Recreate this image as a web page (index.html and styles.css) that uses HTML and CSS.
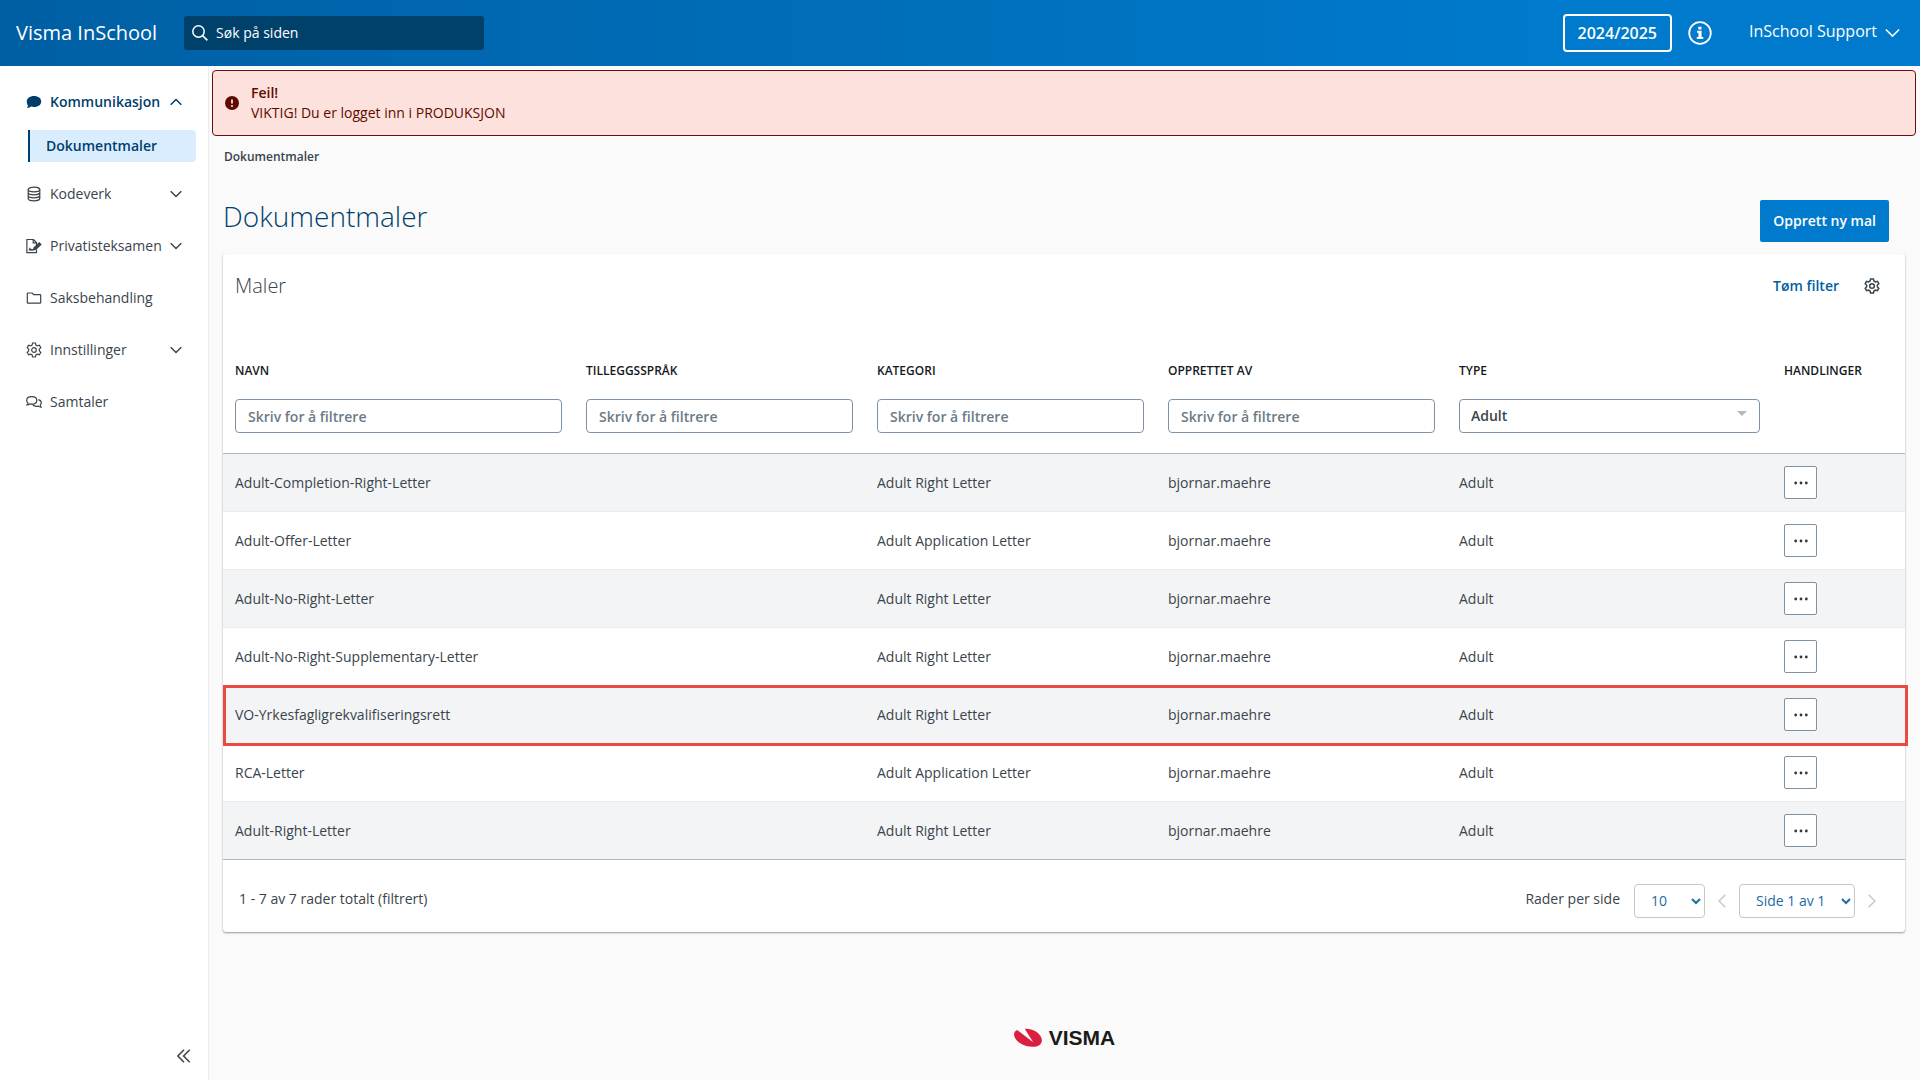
FILE: index.html
```html
<!DOCTYPE html>
<html lang="no">
<head>
    <meta charset="UTF-8">
    <meta name="viewport" content="width=device-width, initial-scale=1.0">
    <title>Dokumentmaler - Visma InSchool</title>
    <link rel="stylesheet" href="styles.css">
</head>
<body>
    <!-- icons used more than once -->
    <svg class="icon-defs" aria-hidden="true">
        <symbol id="icon-down" viewBox="0 0 12 8"><path d="M.7 1.2 6 6.5l5.3-5.3"/></symbol>
        <symbol id="icon-gear" viewBox="0 0 16 16">
            <path d="M6.6 1h2.8l.5 2 1.5.9 2-.6 1.4 2.4L13.300 7.200v1.600l1.500 1.500-1.400 2.400-2-.6-1.500.9-.5 2H6.600l-.5-2-1.500-.9-2 .6-1.400-2.400 1.500-1.500V7.200L1.200 5.700l1.400-2.400 2 .6 1.500-.9z"/>
            <circle cx="8" cy="8" r="2.300"/>
        </symbol>
        <symbol id="icon-dots" viewBox="0 0 14 4">
            <circle cx="1.700" cy="2" r="1.400"/><circle cx="7" cy="2" r="1.400"/><circle cx="12.300" cy="2" r="1.400"/>
        </symbol>
    </svg>

    <header class="topbar">
        <a class="brand" href="#">Visma InSchool</a>
        <div class="search">
            <svg class="search-icon" viewBox="0 0 16 16"><circle cx="6.500" cy="6.500" r="5.700"/><path d="M10.600 10.600l4.800 4.800"/></svg>
            <input type="search" placeholder="Søk på siden" aria-label="Søk på siden">
        </div>
        <div class="topbar-right">
            <button class="year-btn">2024/2025</button>
            <button class="info-btn" aria-label="Informasjon">
                <svg viewBox="0 0 24 24">
                    <circle cx="12" cy="12" r="10.800" fill="none" stroke="#fff" stroke-width="1.800"/>
                    <path fill="#fff" d="M10.300 5.700h3.200v2.700h-3.200zM9 9.800h4.600v6.200h1.700v1.900H8.800V16h1.700v-4.300H9z"/>
                </svg>
            </button>
            <button class="user-btn">InSchool Support <svg class="chevron"><use href="#icon-down"/></svg></button>
        </div>
    </header>

    <div class="layout">
        <aside class="sidebar">
            <nav>
                <button class="nav-item active">
                    <svg class="nav-icon solid" viewBox="0 0 16 16"><path d="M8 2c4.200 0 7.200 2.300 7.200 5.500S12.200 13 8 13c-1.100 0-2-.1-2.900-.4C4 13.600 2.500 14.100.9 14c.6-.6 1-1.700 1-2.700C1.100 10.200.8 9 .8 7.500.8 4.300 3.800 2 8 2z"/></svg>
                    Kommunikasjon
                    <svg class="chevron up"><use href="#icon-down"/></svg>
                </button>
                <a class="nav-sub" href="#">Dokumentmaler</a>
                <button class="nav-item">
                    <svg class="nav-icon" viewBox="0 0 16 16"><ellipse cx="8" cy="3.500" rx="5.800" ry="2.300"/><path d="M2.200 3.500v9c0 1.300 2.600 2.300 5.800 2.300s5.800-1 5.800-2.300v-9M2.200 6.500c0 1.300 2.600 2.300 5.800 2.300s5.800-1 5.800-2.300M2.200 9.500c0 1.300 2.600 2.300 5.800 2.300s5.800-1 5.800-2.300"/></svg>
                    Kodeverk
                    <svg class="chevron"><use href="#icon-down"/></svg>
                </button>
                <button class="nav-item">
                    <svg class="nav-icon" viewBox="0 0 16 16"><path d="M10.500 11.500v3.200H.9V1.500h6.600l3 3V7M7.200 1.700v3.100h3.100M3 12.500l1-2 1 1.800 1-.8 1 .8"/><path d="M7.500 11.800l.7-2.200 5-4.700 1.700 1.700-5 4.600z" fill="#3a444c"/></svg>
                    Privatisteksamen
                    <svg class="chevron"><use href="#icon-down"/></svg>
                </button>
                <a class="nav-item" href="#">
                    <svg class="nav-icon" viewBox="0 0 16 16"><path d="M1.300 13V3.600c0-.4.200-.6.600-.6h4.300l1.500 1.700h6.400c.4 0 .6.200.6.600V12.500c0 .4-.2.600-.6.600H1.900c-.4 0-.6-.1-.6-.6z"/></svg>
                    Saksbehandling
                </a>
                <button class="nav-item">
                    <svg class="nav-icon"><use href="#icon-gear"/></svg>
                    Innstillinger
                    <svg class="chevron"><use href="#icon-down"/></svg>
                </button>
                <a class="nav-item" href="#">
                    <svg class="nav-icon" viewBox="0 0 16 16"><path d="M5.800 2.700c3 0 5 1.500 5 3.700s-2 3.700-5 3.700c-.7 0-1.300-.1-1.900-.2-.8.6-1.800.9-2.900.9.600-.6.900-1.200.9-1.900C1.200 8.300.7 7.400.7 6.400c0-2.200 2.100-3.700 5.100-3.700z"/><path d="M12.300 5.600c1.800.4 3 1.600 3 3.200 0 .9-.4 1.700-1.100 2.300 0 .7.300 1.400.9 2-1.100 0-2.100-.4-2.800-1-2.400.5-4.700-.1-5.700-1.700"/></svg>
                    Samtaler
                </a>
            </nav>
            <button class="collapse-btn" aria-label="Skjul meny">
                <svg viewBox="0 0 14 14"><path d="M7 .8.900 7 7 13.200M12.700.8 6.600 7l6.100 6.200"/></svg>
            </button>
        </aside>

        <main class="main">
            <div class="alert" role="alert">
                <svg class="alert-icon" viewBox="0 0 14 14"><circle cx="7" cy="7" r="7" fill="#5f0a00"/><path d="M7 3.500v4" stroke="#fce1dc" stroke-width="1.800"/><circle cx="7" cy="10" r="1.100" fill="#fce1dc"/></svg>
                <div>
                    <strong>Feil!</strong>
                    <p>VIKTIG! Du er logget inn i PRODUKSJON</p>
                </div>
            </div>

            <div class="breadcrumb">Dokumentmaler</div>
            <div class="page-head">
                <h1>Dokumentmaler</h1>
                <button class="primary-btn">Opprett ny mal</button>
            </div>

            <section class="card">
                <div class="card-head">
                    <h2>Maler</h2>
                    <button class="link-btn">Tøm filter</button>
                    <button class="gear-btn" aria-label="Tabellinnstillinger"><svg><use href="#icon-gear"/></svg></button>
                </div>

                <table class="templates">
                    <colgroup>
                        <col class="col-name"><col class="col-mid"><col class="col-mid"><col class="col-mid"><col class="col-type"><col class="col-actions">
                    </colgroup>
                    <thead>
                        <tr>
                            <th><label for="f-navn">NAVN</label><input id="f-navn" type="text" placeholder="Skriv for å filtrere"></th>
                            <th><label for="f-sprak">TILLEGGSSPRÅK</label><input id="f-sprak" type="text" placeholder="Skriv for å filtrere"></th>
                            <th><label for="f-kategori">KATEGORI</label><input id="f-kategori" type="text" placeholder="Skriv for å filtrere"></th>
                            <th><label for="f-opprettet">OPPRETTET AV</label><input id="f-opprettet" type="text" placeholder="Skriv for å filtrere"></th>
                            <th><label for="f-type">TYPE</label><div class="type-select"><select id="f-type"><option>Adult</option></select></div></th>
                            <th><span class="th-text">HANDLINGER</span></th>
                        </tr>
                    </thead>
                    <tbody>
                        <tr>
                            <td>Adult-Completion-Right-Letter</td><td></td><td>Adult Right Letter</td><td>bjornar.maehre</td><td>Adult</td>
                            <td><button class="more-btn" aria-label="Handlinger"><svg><use href="#icon-dots"/></svg></button></td>
                        </tr>
                        <tr>
                            <td>Adult-Offer-Letter</td><td></td><td>Adult Application Letter</td><td>bjornar.maehre</td><td>Adult</td>
                            <td><button class="more-btn" aria-label="Handlinger"><svg><use href="#icon-dots"/></svg></button></td>
                        </tr>
                        <tr>
                            <td>Adult-No-Right-Letter</td><td></td><td>Adult Right Letter</td><td>bjornar.maehre</td><td>Adult</td>
                            <td><button class="more-btn" aria-label="Handlinger"><svg><use href="#icon-dots"/></svg></button></td>
                        </tr>
                        <tr>
                            <td>Adult-No-Right-Supplementary-Letter</td><td></td><td>Adult Right Letter</td><td>bjornar.maehre</td><td>Adult</td>
                            <td><button class="more-btn" aria-label="Handlinger"><svg><use href="#icon-dots"/></svg></button></td>
                        </tr>
                        <tr class="marked">
                            <td>VO-Yrkesfagligrekvalifiseringsrett</td><td></td><td>Adult Right Letter</td><td>bjornar.maehre</td><td>Adult</td>
                            <td><button class="more-btn" aria-label="Handlinger"><svg><use href="#icon-dots"/></svg></button></td>
                        </tr>
                        <tr>
                            <td>RCA-Letter</td><td></td><td>Adult Application Letter</td><td>bjornar.maehre</td><td>Adult</td>
                            <td><button class="more-btn" aria-label="Handlinger"><svg><use href="#icon-dots"/></svg></button></td>
                        </tr>
                        <tr>
                            <td>Adult-Right-Letter</td><td></td><td>Adult Right Letter</td><td>bjornar.maehre</td><td>Adult</td>
                            <td><button class="more-btn" aria-label="Handlinger"><svg><use href="#icon-dots"/></svg></button></td>
                        </tr>
                    </tbody>
                </table>

                <div class="card-foot">
                    <span class="row-count">1 - 7 av 7 rader totalt (filtrert)</span>
                    <label class="per-page" for="per-page">Rader per side</label>
                    <select id="per-page" class="page-select"><option>10</option></select>
                    <button class="page-btn" aria-label="Forrige side" disabled><svg viewBox="0 0 8 14"><path d="M7.300.7 1 7l6.300 6.300"/></svg></button>
                    <select class="page-select wide" aria-label="Side"><option>Side 1 av 1</option></select>
                    <button class="page-btn" aria-label="Neste side" disabled><svg viewBox="0 0 8 14"><path d="M.7.7 7 7 .7 13.300"/></svg></button>
                </div>
            </section>

            <footer class="footer">
                <svg class="logo-mark" viewBox="0 0 28 20"><path fill="#d9213f" d="M10.700.8C18 .2 25 4 27.300 9.500 29.500 15.500 25 19 18 18.800 10.500 18.500 2.600 14.500.5 8.800-.6 5.500.4 3 3.200 1.900L19.200 14.200z"/></svg>
                <span class="logo-text">VISMA</span>
            </footer>
        </main>
    </div>
</body>
</html>
```
FILE: styles.css
```css
:root {
    --blue: #007acc;
    --blue-dark: #003f6b;
    --text: #3a444c;
    --border: #7f92a3;
}

* {
    box-sizing: border-box;
}

body {
    margin: 0;
    min-height: 100vh;
    display: flex;
    flex-direction: column;
    background: #fafafa;
    color: var(--text);
    font-family: "Open Sans", "Noto Sans", sans-serif;
    font-size: 14px;
    line-height: 20px;
}

button, input, select {
    font: inherit;
    color: inherit;
}

button {
    background: none;
    border: none;
    padding: 0;
    cursor: pointer;
}

a {
    color: inherit;
    text-decoration: none;
}

svg {
    display: block;
    flex: none;
}

.icon-defs {
    display: none;
}

.chevron {
    width: 12px;
    height: 8px;
    fill: none;
    stroke: currentColor;
    stroke-width: 1.5;
}

.chevron.up {
    transform: rotate(180deg);
}

/* top bar */
.topbar {
    display: flex;
    align-items: center;
    height: 66px;
    padding: 0 20px 0 16px;
    background: linear-gradient(90deg, #005fa3, var(--blue) 80%);
    color: #fff;
}

.brand {
    font-size: 20px;
    margin-right: 27px;
}

.search {
    display: flex;
    align-items: center;
    gap: 8px;
    width: 300px;
    height: 34px;
    padding: 0 8px;
    background: #00416b;
    border-radius: 3px;
}

.search-icon {
    width: 16px;
    height: 16px;
    fill: none;
    stroke: #fff;
    stroke-width: 1.5;
}

.search input {
    flex: 1;
    min-width: 0;
    padding: 0;
    background: none;
    border: none;
    outline: none;
}

.search input::placeholder {
    color: #fff;
}

.topbar-right {
    display: flex;
    align-items: center;
    margin-left: auto;
    font-size: 16px;
}

.year-btn {
    height: 38px;
    padding: 0 13px;
    border: 2px solid #fff;
    border-radius: 4px;
    font-weight: 600;
}

.info-btn {
    margin: 0 37px 0 16px;
}

.info-btn svg {
    width: 24px;
    height: 24px;
}

.user-btn {
    display: flex;
    align-items: center;
    gap: 8px;
    padding-bottom: 4px;
}

.user-btn .chevron {
    width: 15px;
    height: 10px;
    margin-top: 4px;
    stroke-width: 1.2;
}

.layout {
    flex: 1;
    display: flex;
}

/* sidebar */
.sidebar {
    display: flex;
    flex-direction: column;
    width: 209px;
    flex: none;
    padding: 10px 12px 17px 26px;
    background: #fff;
    border-right: 1px solid #ebebeb;
}

.nav-item {
    display: flex;
    align-items: center;
    gap: 8px;
    width: 100%;
    height: 52px;
    padding-right: 14px;
    text-align: left;
    white-space: nowrap;
}

.nav-item .chevron {
    margin-left: auto;
}

.nav-item.active {
    color: var(--blue-dark);
    font-weight: 600;
}

.nav-icon {
    width: 16px;
    height: 16px;
    fill: none;
    stroke: currentColor;
    stroke-width: 1.2;
}

.nav-icon.solid {
    fill: currentColor;
    stroke: none;
}

.nav-sub {
    display: block;
    margin: 2px 0 6px 2px;
    padding: 6px 16px;
    background: #d9edff;
    border-left: 2px solid var(--blue-dark);
    border-radius: 0 4px 4px 0;
    color: var(--blue-dark);
    font-weight: 600;
}

.collapse-btn {
    margin-top: auto;
    align-self: flex-end;
    padding-right: 5px;
}

.collapse-btn svg {
    width: 14px;
    height: 14px;
    fill: none;
    stroke: var(--text);
    stroke-width: 1.5;
}

/* main */
.main {
    flex: 1;
    min-width: 0;
    display: flex;
    flex-direction: column;
}

.alert {
    display: flex;
    align-items: center;
    gap: 12px;
    margin: 4px 4px 0 3px;
    padding: 12px;
    background: #fce1dc;
    border: 1px solid #6b0f0a;
    border-radius: 4px;
    color: #5f0a00;
}

.alert strong {
    font-weight: 600;
}

.alert p {
    margin: 0;
}

.alert-icon {
    width: 14px;
    height: 14px;
}

.breadcrumb {
    padding: 11px 15px 0;
    font-size: 12px;
    font-weight: 600;
}

.page-head {
    display: flex;
    align-items: flex-start;
    justify-content: space-between;
    margin: 33px 31px 12px 14px;
}

h1 {
    margin: 0;
    color: var(--blue-dark);
    font-size: 28px;
    font-weight: 300;
    line-height: 32px;
}

.primary-btn {
    height: 42px;
    padding: 0 13px;
    background: var(--blue);
    border-radius: 2px;
    color: #fff;
    font-weight: 600;
}

/* card with the table */
.card {
    margin: 0 15px 0 14px;
    background: #fff;
    border-radius: 3px;
    box-shadow: 0 1px 2px rgba(0, 0, 0, 0.4);
}

.card-head {
    display: flex;
    align-items: center;
    height: 64px;
    padding: 0 25px 0 12px;
}

h2 {
    margin: 0 auto 0 0;
    font-size: 20px;
    font-weight: 300;
}

.link-btn {
    margin-right: 25px;
    color: #005fa3;
    font-weight: 600;
}

.gear-btn svg {
    width: 16px;
    height: 16px;
    fill: none;
    stroke: var(--text);
    stroke-width: 1.5;
}

.templates {
    width: 100%;
    table-layout: fixed;
    border-spacing: 0;
}

.col-name { width: 351px; }
.col-mid { width: 291px; }
.col-type { width: 325px; }
.col-actions { width: 133px; }

.templates th {
    padding: 43px 12px 20px;
    border-bottom: 1px solid #adb7bd;
    text-align: left;
    vertical-align: top;
    font-weight: 600;
}

.templates label,
.th-text {
    display: block;
    margin-bottom: 18px;
    color: #14191d;
    font-size: 12px;
}

.templates input,
.templates select {
    display: block;
    width: 100%;
    height: 34px;
    padding: 0 12px;
    background: #fff;
    border: 1px solid var(--border);
    border-radius: 4px;
}

.templates input::placeholder {
    color: #6b7b86;
}

.type-select {
    position: relative;
}

.templates select {
    padding: 0 11px;
    appearance: none;
}

.type-select::after {
    content: '';
    position: absolute;
    top: 12px;
    right: 13px;
    border: 5px solid transparent;
    border-top-color: #b0bac1;
    border-bottom: none;
    pointer-events: none;
}

.templates td {
    height: 58px;
    padding: 0 12px;
    border-bottom: 1px solid #e9ecee;
}

.templates tbody tr:nth-child(odd) {
    background: #f3f4f6;
}

.templates tbody tr:last-child td {
    border-bottom-color: #adb7bd;
}

/* red frame round the row */
.marked {
    position: relative;
}

.marked::after {
    content: '';
    position: absolute;
    inset: -1px -3px -2px 0;
    border: 3px solid #e94b43;
    pointer-events: none;
}

.more-btn {
    display: flex;
    align-items: center;
    justify-content: center;
    width: 33px;
    height: 33px;
    background: #fff;
    border: 1px solid var(--border);
    border-radius: 2px;
}

.more-btn svg {
    width: 14px;
    height: 4px;
    fill: #2d363c;
}

.card-foot {
    display: flex;
    align-items: center;
    height: 72px;
    padding: 9px 29px 0 16px;
}

.row-count {
    margin-right: auto;
}

.row-count,
.per-page {
    padding-bottom: 4px;
}

.per-page {
    margin-right: 14px;
}

.page-select {
    width: 71px;
    height: 34px;
    padding: 0 0 0 12px;
    background: #fff;
    border: 1px solid #c3c8cc;
    border-radius: 4px;
    color: #1b6ca3;
}

.page-select.wide {
    width: 116px;
}

.page-btn {
    margin: 0 13px;
}

.page-btn:last-child {
    margin-right: 0;
}

.page-btn svg {
    width: 8px;
    height: 14px;
    fill: none;
    stroke: #c3c8cc;
    stroke-width: 1.5;
}

/* footer */
.footer {
    display: flex;
    align-items: center;
    justify-content: center;
    gap: 7px;
    margin-top: auto;
    padding: 40px 0 30px;
}

.logo-mark {
    width: 28px;
    height: 20px;
}

.logo-text {
    color: #1a1a18;
    font-family: "Liberation Sans Narrow", "Liberation Sans", sans-serif;
    font-size: 21px;
    font-weight: 700;
    line-height: 24px;
}
```
